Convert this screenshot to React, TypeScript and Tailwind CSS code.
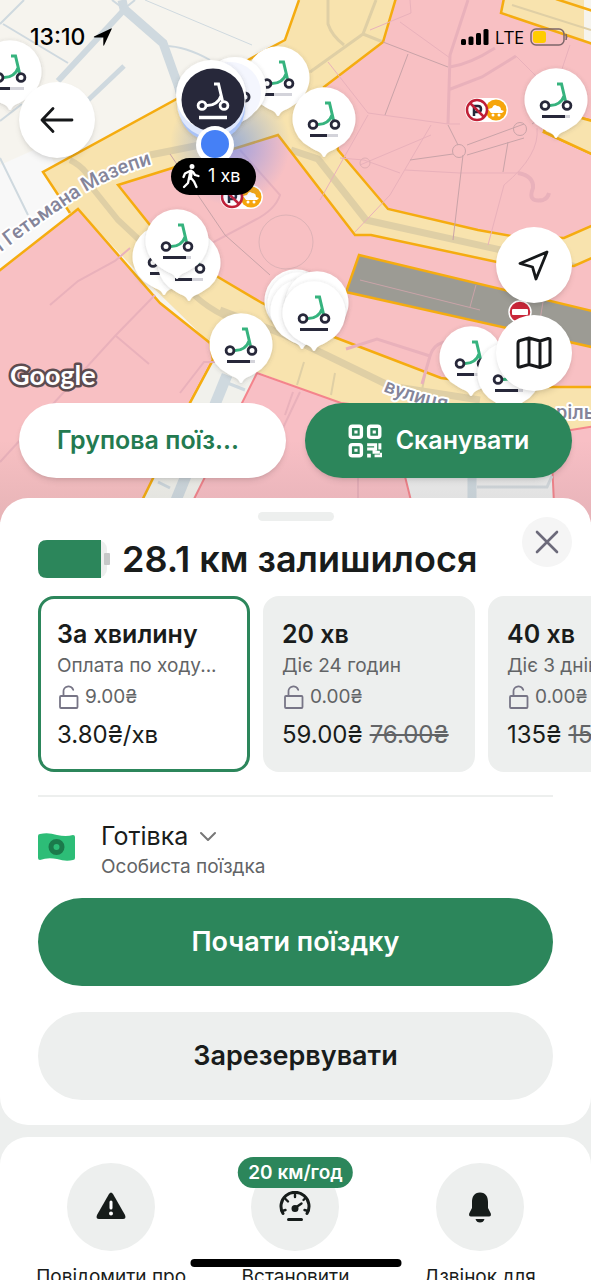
import type { ReactNode } from 'react'

interface PinData {
  x: number
  y: number
  level: number
}

interface Tariff {
  title: string
  note: string
  unlock: string
  price: string
  oldPrice?: string
}

const PINS: PinData[] = [
  { x: 10, y: 72, level: 14 },
  { x: 278, y: 78, level: 10 },
  { x: 324, y: 119, level: 17 },
  { x: 556, y: 100, level: 23 },
  { x: 164, y: 257, level: 20 },
  { x: 189, y: 263, level: 17 },
  { x: 177, y: 241, level: 23 },
  { x: 296, y: 301, level: 28 },
  { x: 299, y: 304, level: 28 },
  { x: 302, y: 311, level: 28 },
  { x: 317, y: 303, level: 28 },
  { x: 314, y: 313, level: 28 },
  { x: 241, y: 345, level: 23 },
  { x: 471, y: 358, level: 17 },
  { x: 509, y: 374, level: 23 },
]

const TARIFFS: Tariff[] = [
  { title: 'За хвилину', note: 'Оплата по ходу...', unlock: '9.00₴', price: '3.80₴/хв' },
  { title: '20 хв', note: 'Діє 24 годин', unlock: '0.00₴', price: '59.00₴', oldPrice: '76.00₴' },
  { title: '40 хв', note: 'Діє 3 днів', unlock: '0.00₴', price: '135₴', oldPrice: '152₴' },
]

function Scooter({ dark = false }: { dark?: boolean }) {
  const frame = dark ? '#fff' : '#36b37e'
  const wheel = dark ? '#fff' : '#27283a'
  return (
    <g fill="none" strokeWidth="2.8">
      <path d="M1 -16H5.5L9.5 1M8.500 -5C6 2 2 5.500 -6 5.500" stroke={frame} strokeWidth="3" />
      <circle cx="-11" cy="5.500" r="3.900" stroke={wheel} />
      <circle cx="11" cy="5.500" r="3.900" stroke={wheel} />
    </g>
  )
}

function Pin({ x, y, level }: PinData) {
  return (
    <g transform={`translate(${x} ${y})`}>
      <path
        d="M0 38C-1.5 38 -1.5 36 -3 34.500C-6 31.500 -10 31.500 -15 27.500A31.500 31.500 0 1 1 15 27.500C10 31.500 6 31.500 3 34.500C1.500 36 1.500 38 0 38Z"
        fill="#fff"
        filter="url(#pin-shadow)"
      />
      <Scooter />
      <path d="M-14 16.500H14" stroke="#d3d3da" strokeWidth="3" />
      <path d={`M-14 16.500H${level - 14}`} stroke="#27283a" strokeWidth="3" />
    </g>
  )
}

function ZoneBadge({ x, y }: { x: number; y: number }) {
  return (
    <g transform={`translate(${x} ${y})`}>
      <rect x="-12" y="-12" width="43" height="24" rx="12" fill="#fff" />
      <circle cx="19" cy="0" r="10.500" fill="#f6a50b" />
      <path d="M11 -1L15 -2Q17 -7 20 -4Q24 -4 24 0L27 1L25 3H14Z" fill="#fff" />
      <circle cx="16" cy="5" r="1.500" fill="#fff" />
      <circle cx="22" cy="5" r="1.500" fill="#fff" />
      <circle r="10" fill="#fff" stroke="#c01f36" strokeWidth="2.500" />
      <path d="M-3 6V-4H1Q4 -4 4 -1Q4 2 1 2H-3" fill="none" stroke="#27283a" strokeWidth="2.500" />
      <path d="M-7 -7L7 7" stroke="#c01f36" strokeWidth="2.500" />
    </g>
  )
}

function CityMap() {
  return (
    <svg
      className="absolute inset-0 h-full w-full"
      viewBox="0 0 591 522"
      preserveAspectRatio="xMidYMin slice"
      aria-hidden="true"
    >
      <defs>
        <filter id="pin-shadow" x="-30%" y="-30%" width="160%" height="160%">
          <feDropShadow dx="0" dy="1" stdDeviation="2" floodColor="#444" floodOpacity="0.25" />
        </filter>
        <radialGradient id="halo">
          <stop offset="0" stopColor="#4f82f5" stopOpacity="0.55" />
          <stop offset="1" stopColor="#4f82f5" stopOpacity="0" />
        </radialGradient>
        <linearGradient id="map-fade" x1="0" y1="0" x2="0" y2="1">
          <stop offset="0" stopColor="#444" stopOpacity="0" />
          <stop offset="1" stopColor="#444" stopOpacity="0.1" />
        </linearGradient>
        <path id="street-west" d="M-34 278L5 249Q46 218 86 192Q112 176 152 164" />
        <path id="street-south" d="M383 391Q420 407 480 416" />
      </defs>

      <rect width="591" height="522" fill="#f6f4ee" />
      <path d="M0 165L45 145L78 209L0 270Z" fill="#f8f8f8" />

      {/* Streets outside of the zones */}
      <g fill="none" stroke="#cfd9df">
        <path d="M122 0L124 9L163 43L178 85L185 110" strokeWidth="9" />
        <path d="M124 10L58 81" strokeWidth="6" />
        <path d="M124 66L85 103" strokeWidth="5" />
        <path d="M112 0L124 9L135 0M0 24L24 0M3 24L68 63M165 46Q185 46 210 60M0 121L22 104M0 158L28 215" strokeWidth="2" />
        <path d="M145 0L252 45" strokeWidth="1" />
      </g>

      {/* Slow zones */}
      <path
        d="M299 0L285 40L270 48L43 172L70 213L78 209L140 275L210 343L213 360L260 373L341 403L571 430L591 427V118L584 118V0Z"
        fill="#f8e3ae"
      />
      <g fill="none" stroke="#dfcfa5">
        <path d="M70 160Q90 170 94 190L118 220L150 250L185 285Q205 310 240 322" strokeWidth="6" />
        <path d="M150 155L225 140M291 150L318 159L366 220L591 270M220 310L285 335L390 386L480 400" strokeWidth="7" />
        <path d="M328 0V24Q332 36 344 45M376 0L363 34L310 72M363 34L383 42" strokeWidth="3" />
        <path d="M304 362L297 385M335 373L331 395M425 375L420 400M512 5L591 30" strokeWidth="2" />
      </g>

      {/* No-parking zones */}
      <g fill="#f8c0c3" stroke="#f5ac10" strokeWidth="2.500">
        <path d="M396 -2L383 42L324 87L338 150L388 209L478 230L511 236L564 238L596 224V156L544 132L552 110L596 122V45L501 13L504 -2Z" />
        <path d="M118 185L278 135L355 235L371 235L497 262L574 266L596 256V387H510L441 378L334 337L262 303L218 277L150 225Z" />
        <path d="M-5 274L78 209L160 303L210 343L213 360L190 403L132 525H-5Z" />
        <path d="M359 255L596 312V348L346 292Z" fill="#9c9b94" />
      </g>
      <path d="M544 132L552 110L596 122V156Z" fill="#f8e3ae" />
      <path d="M596 122L552 110L544 132L596 156M299 0L285 40L270 48L43 172L70 213M556 -1L596 12" fill="none" stroke="#f5ac10" strokeWidth="2.500" />
      <path d="M213 360L190 403L130 525H182L257 373Z" fill="#f1f1ec" />
      <path d="M213 360L190 403L130 525" fill="none" stroke="#f5ac10" strokeWidth="2.500" />
      <path d="M227 375L170 515" stroke="#cfd9df" strokeWidth="11" />
      <path d="M225 382L245 390M158 482L170 488" stroke="#cfd9df" strokeWidth="3" />
      <path d="M181 525L257 373L341 403L571 430L596 426V525Z" fill="#f8bfc5" stroke="#f4848c" strokeWidth="2" />
      <path d="M396 440L417 525H555L551 440Z" fill="#eeeeee" stroke="#f4848c" strokeWidth="2" />
      <path d="M472 470V525" stroke="#cfd9df" strokeWidth="9" />
      <path d="M477 487H547L552 476" fill="none" stroke="#d3d9dd" strokeWidth="3" />

      {/* Paths inside the zones */}
      <g fill="none" stroke="#e9b1bb" strokeWidth="2">
        <path d="M468 0L450 55L448 124M450 67Q470 64 495 48M448 90L482 77L516 56" strokeWidth="3" />
        <path d="M328 62L368 113L448 124H460M368 115L320 200M431 125L390 195L355 232M431 135L360 165M340 158L364 160L400 173M405 170L460 173H520M537 128Q540 155 504 185L488 245M516 56L540 80M570 45L560 75M400 22L450 58M370 30L411 13L410 0" strokeWidth="1" />
        <path d="M518 173Q534 176 533 188Q527 203 543 200Q548 198 549 193" strokeWidth="4" />
        <path d="M50 305L78 281L115 261L130 248M155 295L116 335L0 462M116 336L149 364M180 393L204 362H215M98 500L80 520" strokeWidth="2" />
        <path d="M346 349L377 339L430 356Q433 345 444 342M430 356L422 384" strokeWidth="3" />
        <path d="M300 392L282 430M358 470V520M293 392L285 415" strokeWidth="2" />
        <path d="M240 150L280 195Q275 210 255 220L180 260" strokeWidth="2" />
      </g>
      <g fill="none" stroke="#c9a3a8" strokeWidth="1">
        <path d="M383 42L448 67M408 54L385 115M448 125L458 145M410 160L453 154M463 155L453 240M467 145L524 124M467 155L524 138M508 142L503 172M532 124L538 120M170 154L225 235L270 275M360 280L480 310M476 285L470 307M543 302L540 320" />
        <circle cx="459" cy="151" r="6.500" />
        <circle cx="520" cy="129" r="6.500" />
        <circle cx="365" cy="163" r="5" stroke="#e0aeb4" />
        <circle cx="286" cy="242" r="27" stroke="#deb2b6" />
      </g>

      <g
        fontFamily="Roboto, sans-serif"
        fontSize="20"
        fontWeight="500"
        fill="#85859a"
        stroke="#fff"
        strokeWidth="4"
        strokeLinejoin="round"
        paintOrder="stroke"
      >
        <text textAnchor="end">
          <textPath href="#street-west" startOffset="100%">я Гетьмана Мазепи</textPath>
        </text>
        <text>
          <textPath href="#street-south">вулиця</textPath>
        </text>
        <text x="556" y="419">ріль</text>
      </g>

      <ZoneBadge x={477} y={110} />
      <ZoneBadge x={232} y={197} />
      <g transform="translate(520 312)">
        <circle r="11" fill="#c9273a" stroke="#fff" strokeWidth="1.500" />
        <rect x="-8" y="-3" width="16" height="6" rx="1" fill="#fff" />
      </g>

      <circle cx="230" cy="145" r="60" fill="url(#halo)" />
      {PINS.map((pin, i) => (
        <Pin key={i} {...pin} />
      ))}

      {/* Selected scooter and own position */}
      <g filter="url(#pin-shadow)">
        <circle cx="235" cy="88" r="31" fill="#fff" />
        <circle cx="230" cy="93" r="31" fill="#f4f6fe" />
      </g>
      <circle cx="245" cy="97" r="4" fill="none" stroke="#27283a" strokeWidth="3" />
      <g filter="url(#pin-shadow)">
        <circle cx="212" cy="108" r="33" fill="#a9c2f7" />
        <circle cx="211" cy="103" r="34" fill="#dfe8fd" />
        <circle cx="211" cy="95" r="35" fill="#fff" />
      </g>
      <circle cx="213" cy="100" r="31.500" fill="#27283a" />
      <g transform="translate(213 100)">
        <Scooter dark />
        <path d="M-14 17.500H14" stroke="#fff" strokeWidth="3.500" />
      </g>
      <circle cx="215" cy="145" r="19" fill="#fff" />
      <circle cx="215" cy="144" r="14" fill="#4580f6" />
      <rect x="171" y="158" width="85" height="37" rx="18.500" fill="#000" />
      <g transform="translate(191 176)" stroke="#fff" strokeLinecap="round" strokeLinejoin="round" fill="none">
        <circle cx="1" cy="-9.500" r="1.500" fill="#fff" strokeWidth="2" />
        <path d="M0 -4.500L-1 2" strokeWidth="4" />
        <path d="M0 2L3 5.500L5.500 11M-2 2L-3 7L-7 11M-1 -5L-6 -2.500L-7.500 1M2 -4L4 -1L7.500 0" strokeWidth="2.300" />
      </g>
      <text x="208" y="182" fontFamily="Inter, sans-serif" fontSize="18" fill="#fff">1 хв</text>

      <text
        x="10"
        y="385"
        fontFamily="Lato, sans-serif"
        fontSize="27"
        fontWeight="700"
        fill="#fff"
        stroke="#5d4c50"
        strokeWidth="5"
        strokeLinejoin="round"
        paintOrder="stroke"
      >
        Google
      </text>
      <rect y="440" width="591" height="82" fill="url(#map-fade)" />
    </svg>
  )
}

function StatusBar() {
  return (
    <div className="flex h-[74px] items-center justify-between pr-1 pl-[11px] text-black">
      <div className="flex items-center gap-2">
        <span className="text-[23px] leading-7 font-medium">13:10</span>
        <svg className="size-5" viewBox="0 0 20 20" aria-hidden="true">
          <path d="M1 9.500L18 1.500Q19 1 18.700 2L11 18.500Q10.500 19.300 10.300 18V10.500H2Q0 10.300 1 9.500Z" fill="#000" />
        </svg>
      </div>
      <div className="flex items-center gap-[6px]">
        <svg className="h-[18px] w-7" viewBox="0 0 28 18" aria-hidden="true">
          <rect x="0" y="11" width="5" height="6" rx="1.500" />
          <rect x="7.500" y="8.500" width="5" height="8.500" rx="1.500" />
          <rect x="15" y="5" width="5" height="12" rx="1.500" />
          <rect x="22.500" y="1" width="5" height="16" rx="1.500" />
        </svg>
        <span className="font-['Open_Sans',sans-serif] text-lg font-medium">LTE</span>
        <svg className="h-[18px] w-[38px]" viewBox="0 0 38 18" fill="none" aria-hidden="true">
          <rect x="1" y="1" width="33" height="16" rx="5" stroke="#7c6669" strokeWidth="1.500" />
          <rect x="3" y="3" width="13" height="12" rx="3" fill="#fc0" />
          <path d="M36 6Q38 9 36 12Z" fill="#7c6669" stroke="#7c6669" />
        </svg>
      </div>
    </div>
  )
}

function RoundButton({ label, children }: { label: string; children: ReactNode }) {
  return (
    <button
      type="button"
      aria-label={label}
      className="flex size-[76px] items-center justify-center rounded-full bg-white text-[#16181a] shadow-md"
    >
      {children}
    </button>
  )
}

function QrIcon() {
  return (
    <svg className="size-[34px]" viewBox="0 0 32 32" fill="none" stroke="currentColor" strokeWidth="3.200" aria-hidden="true">
      <rect x="2.100" y="2.100" width="10.500" height="10.500" rx="2" />
      <rect x="19.400" y="2.100" width="10.500" height="10.500" rx="2" />
      <rect x="2.100" y="19.400" width="10.500" height="10.500" rx="2" />
      <path d="M6 6h3v3H6zM23.200 6h3v3h-3zM6 23.200h3v3H6zM18 28h3.500v3.500H18z" fill="currentColor" stroke="none" />
      <path d="M18 19.500H26V23.500H18M30 18V24M24.500 23.500V26.500H30M25 30H31.500V27" strokeWidth="2.800" />
    </svg>
  )
}

function LockIcon() {
  return (
    <svg className="h-6 w-6" viewBox="0 0 24 24" fill="none" stroke="#777586" strokeWidth="1.800" strokeLinejoin="round" strokeLinecap="round" aria-hidden="true">
      <rect x="3" y="11" width="17.500" height="12" rx="1" />
      <path d="M6.500 11V7A5 5 0 0 1 16.200 4.800" />
    </svg>
  )
}

function TariffCard({ tariff, selected }: { tariff: Tariff; selected: boolean }) {
  return (
    <button
      type="button"
      aria-pressed={selected}
      className={`w-[212px] shrink-0 rounded-2xl border-3 px-4 py-[19px] text-left ${
        selected ? 'border-[#2c865b] bg-white' : 'border-[#edefee] bg-[#edefee]'
      }`}
    >
      <div className="text-[25px] leading-8 font-semibold">{tariff.title}</div>
      <div className="truncate text-[19px] leading-8 text-[#626466]">{tariff.note}</div>
      <div className="flex h-[30px] items-center gap-1 text-[19px] text-[#626466]">
        <LockIcon />
        {tariff.unlock}
      </div>
      <div className="mt-2 text-2xl leading-[30px] whitespace-nowrap">
        {tariff.price}
        {tariff.oldPrice && <s className="ml-[7px] text-[#626466]">{tariff.oldPrice}</s>}
      </div>
    </button>
  )
}

function Action({ label, badge, children }: { label: string; badge?: string; children: ReactNode }) {
  return (
    <button type="button" className="flex flex-col items-center gap-[14px]">
      <span className="relative flex size-[88px] items-center justify-center rounded-full bg-[#edefee]">
        {children}
        {badge && (
          <span className="absolute -top-[6px] left-1/2 -translate-x-1/2 rounded-full bg-[#2c865b] px-[10px] text-[19px] leading-[31px] font-semibold whitespace-nowrap text-white">
            {badge}
          </span>
        )}
      </span>
      <span className="text-[19px] leading-6">{label}</span>
    </button>
  )
}

export default function App() {
  return (
    <div className="relative flex h-screen flex-col overflow-hidden bg-[#edefee] font-[Inter,sans-serif] text-[#191c1b]">
      <header className="relative -mb-6 h-[522px] shrink-0 overflow-hidden">
        <CityMap />
        <div className="relative flex h-full flex-col px-[19px] pb-11">
          <StatusBar />
          <div className="pt-2">
            <RoundButton label="Назад">
              <svg className="size-9" viewBox="0 0 36 36" fill="none" stroke="currentColor" strokeWidth="2.800" strokeLinecap="round" strokeLinejoin="round" aria-hidden="true">
                <path d="M33 18H3M14 6.500L3 18L14 29.500" />
              </svg>
            </RoundButton>
          </div>
          <div className="mt-auto flex flex-col items-end gap-3 pb-3">
            <RoundButton label="Моє місце">
              <svg className="size-8" viewBox="0 0 32 32" fill="none" stroke="currentColor" strokeWidth="2.800" strokeLinejoin="round" aria-hidden="true">
                <path d="M29 3L2 14.500L14.500 18L18 30Z" />
              </svg>
            </RoundButton>
            <RoundButton label="Карта">
              <svg className="size-9" viewBox="0 0 36 36" fill="none" stroke="currentColor" strokeWidth="3" strokeLinejoin="round" aria-hidden="true">
                <path d="M2 8.500Q2 6 4 5.500L13 3L24 6L32 3.500Q34 3 34 5V27Q34 29.500 32 30L24 32.500L13 29.500L4 32Q2 32.500 2 30.500ZM13 3V29.500M24 6V32.500" />
              </svg>
            </RoundButton>
          </div>
          <div className="grid grid-cols-2 gap-[19px] text-[25px] font-semibold">
            <button type="button" className="h-[75px] truncate rounded-full bg-white px-[38px] text-left text-[#237a50] shadow-md">
              Групова поїз...
            </button>
            <button type="button" className="flex h-[75px] items-center justify-center gap-[14px] rounded-full bg-[#2c865b] text-white shadow-md">
              <QrIcon />
              Сканувати
            </button>
          </div>
        </div>
      </header>

      <main className="relative shrink-0 rounded-[28px] bg-white pt-[14px] pb-[25px]">
        <div className="mx-auto h-[9px] w-[76px] rounded-full bg-[#edefee]" />
        <div className="-mt-1 flex items-start justify-between pr-[19px] pl-[38px]">
          <div className="flex items-center gap-3 pt-[19px]">
            <svg className="h-[38px] w-[72px]" viewBox="0 0 72 38" aria-hidden="true">
              <rect x="0" y="0" width="69" height="38" rx="9" fill="#edefee" />
              <path d="M9 0H63V38H9Q0 38 0 29V9Q0 0 9 0Z" fill="#2c865b" />
              <rect x="66" y="13" width="6" height="12" rx="1" fill="#c6c8c8" />
            </svg>
            <h1 className="text-4xl leading-[46px] font-semibold">28.1 км залишилося</h1>
          </div>
          <button type="button" aria-label="Закрити" className="flex size-[50px] items-center justify-center rounded-full bg-[#f5f5f5]">
            <svg className="size-6" viewBox="0 0 24 24" stroke="#6c6a7a" strokeWidth="2.600" strokeLinecap="round" aria-hidden="true">
              <path d="M2 2L22 22M22 2L2 22" />
            </svg>
          </button>
        </div>

        <div className="mt-[14px] flex gap-[13px] overflow-hidden pl-[38px]">
          {TARIFFS.map((tariff, i) => (
            <TariffCard key={tariff.title} tariff={tariff} selected={i === 0} />
          ))}
        </div>

        <div className="px-[38px]">
          <hr className="mt-[23px] border-t-2 border-[#edefee]" />
          <button type="button" className="mt-6 flex items-start gap-[26px] text-left">
            <svg className="mt-3 h-7 w-[37px]" viewBox="0 0 37 28" aria-hidden="true">
              <path d="M0 3Q0 1 2 1Q10 -1 19 2Q28 4 35 2Q37 2 37 4V25Q37 27 35 27Q28 29 19 26Q10 24 2 27Q0 27 0 25Z" fill="#2dbd77" />
              <circle cx="18.500" cy="14" r="5.500" fill="none" stroke="#1b7a4b" strokeWidth="5" />
            </svg>
            <span className="flex flex-col">
              <span className="flex items-center gap-3 text-[25px] leading-[30px]">
                Готівка
                <svg className="h-4 w-4" viewBox="0 0 16 16" fill="none" stroke="#777" strokeWidth="2" strokeLinecap="round" strokeLinejoin="round" aria-hidden="true">
                  <path d="M1 5L8 12L15 5" />
                </svg>
              </span>
              <span className="text-[19px] leading-8 text-[#626466]">Особиста поїздка</span>
            </span>
          </button>
          <div className="mt-[15px] flex flex-col gap-[26px] text-[27px] font-semibold">
            <button type="button" className="h-[88px] rounded-full bg-[#2c865b] text-white">Почати поїздку</button>
            <button type="button" className="h-[88px] rounded-full bg-[#edefee]">Зарезервувати</button>
          </div>
        </div>
      </main>

      <section className="mt-3 grid shrink-0 grid-cols-3 rounded-t-[28px] bg-white px-[19px] pt-[26px] pb-10">
        <Action label="Повідомити про">
          <svg className="size-8" viewBox="0 0 32 32" aria-hidden="true">
            <path d="M14 3Q16 0 18 3L30 24Q31.500 28 28 28H4Q0.500 28 2 24Z" fill="#161c1a" />
            <path d="M16 11V17" stroke="#fff" strokeWidth="3" strokeLinecap="round" />
            <circle cx="16" cy="22.500" r="2" fill="#fff" />
          </svg>
        </Action>
        <Action label="Встановити" badge="20 км/год">
          <svg className="size-8" viewBox="0 0 32 32" fill="none" stroke="#161c1a" strokeWidth="3" strokeLinecap="round" aria-hidden="true">
            <path d="M4 22.500A14 14 0 1 1 28 22.500M9.500 28.500H22.500" />
            <path d="M16 2V6M6.500 8L9 10.500M25.500 8L24.500 9M3 20L6.500 19M29 20L25.500 19M16 17L22.500 12.500" strokeWidth="2.400" />
            <circle cx="16" cy="17.500" r="2" fill="#161c1a" />
          </svg>
        </Action>
        <Action label="Дзвінок для">
          <svg className="size-8" viewBox="0 0 32 32" fill="#161c1a" aria-hidden="true">
            <path d="M16 1.500C10 1.500 8 6 8 11V17L5.200 22.500Q4.500 25.500 7 25.500H25Q27.500 25.500 26.800 22.500L24 17V11C24 6 22 1.500 16 1.500Z" />
            <path d="M11.500 28H20.500Q19.500 31.500 16 31.500Q12.500 31.500 11.500 28Z" />
          </svg>
        </Action>
      </section>

      <div className="fixed bottom-[13px] left-1/2 h-2 w-[211px] -translate-x-1/2 rounded-full bg-black" />
    </div>
  )
}
